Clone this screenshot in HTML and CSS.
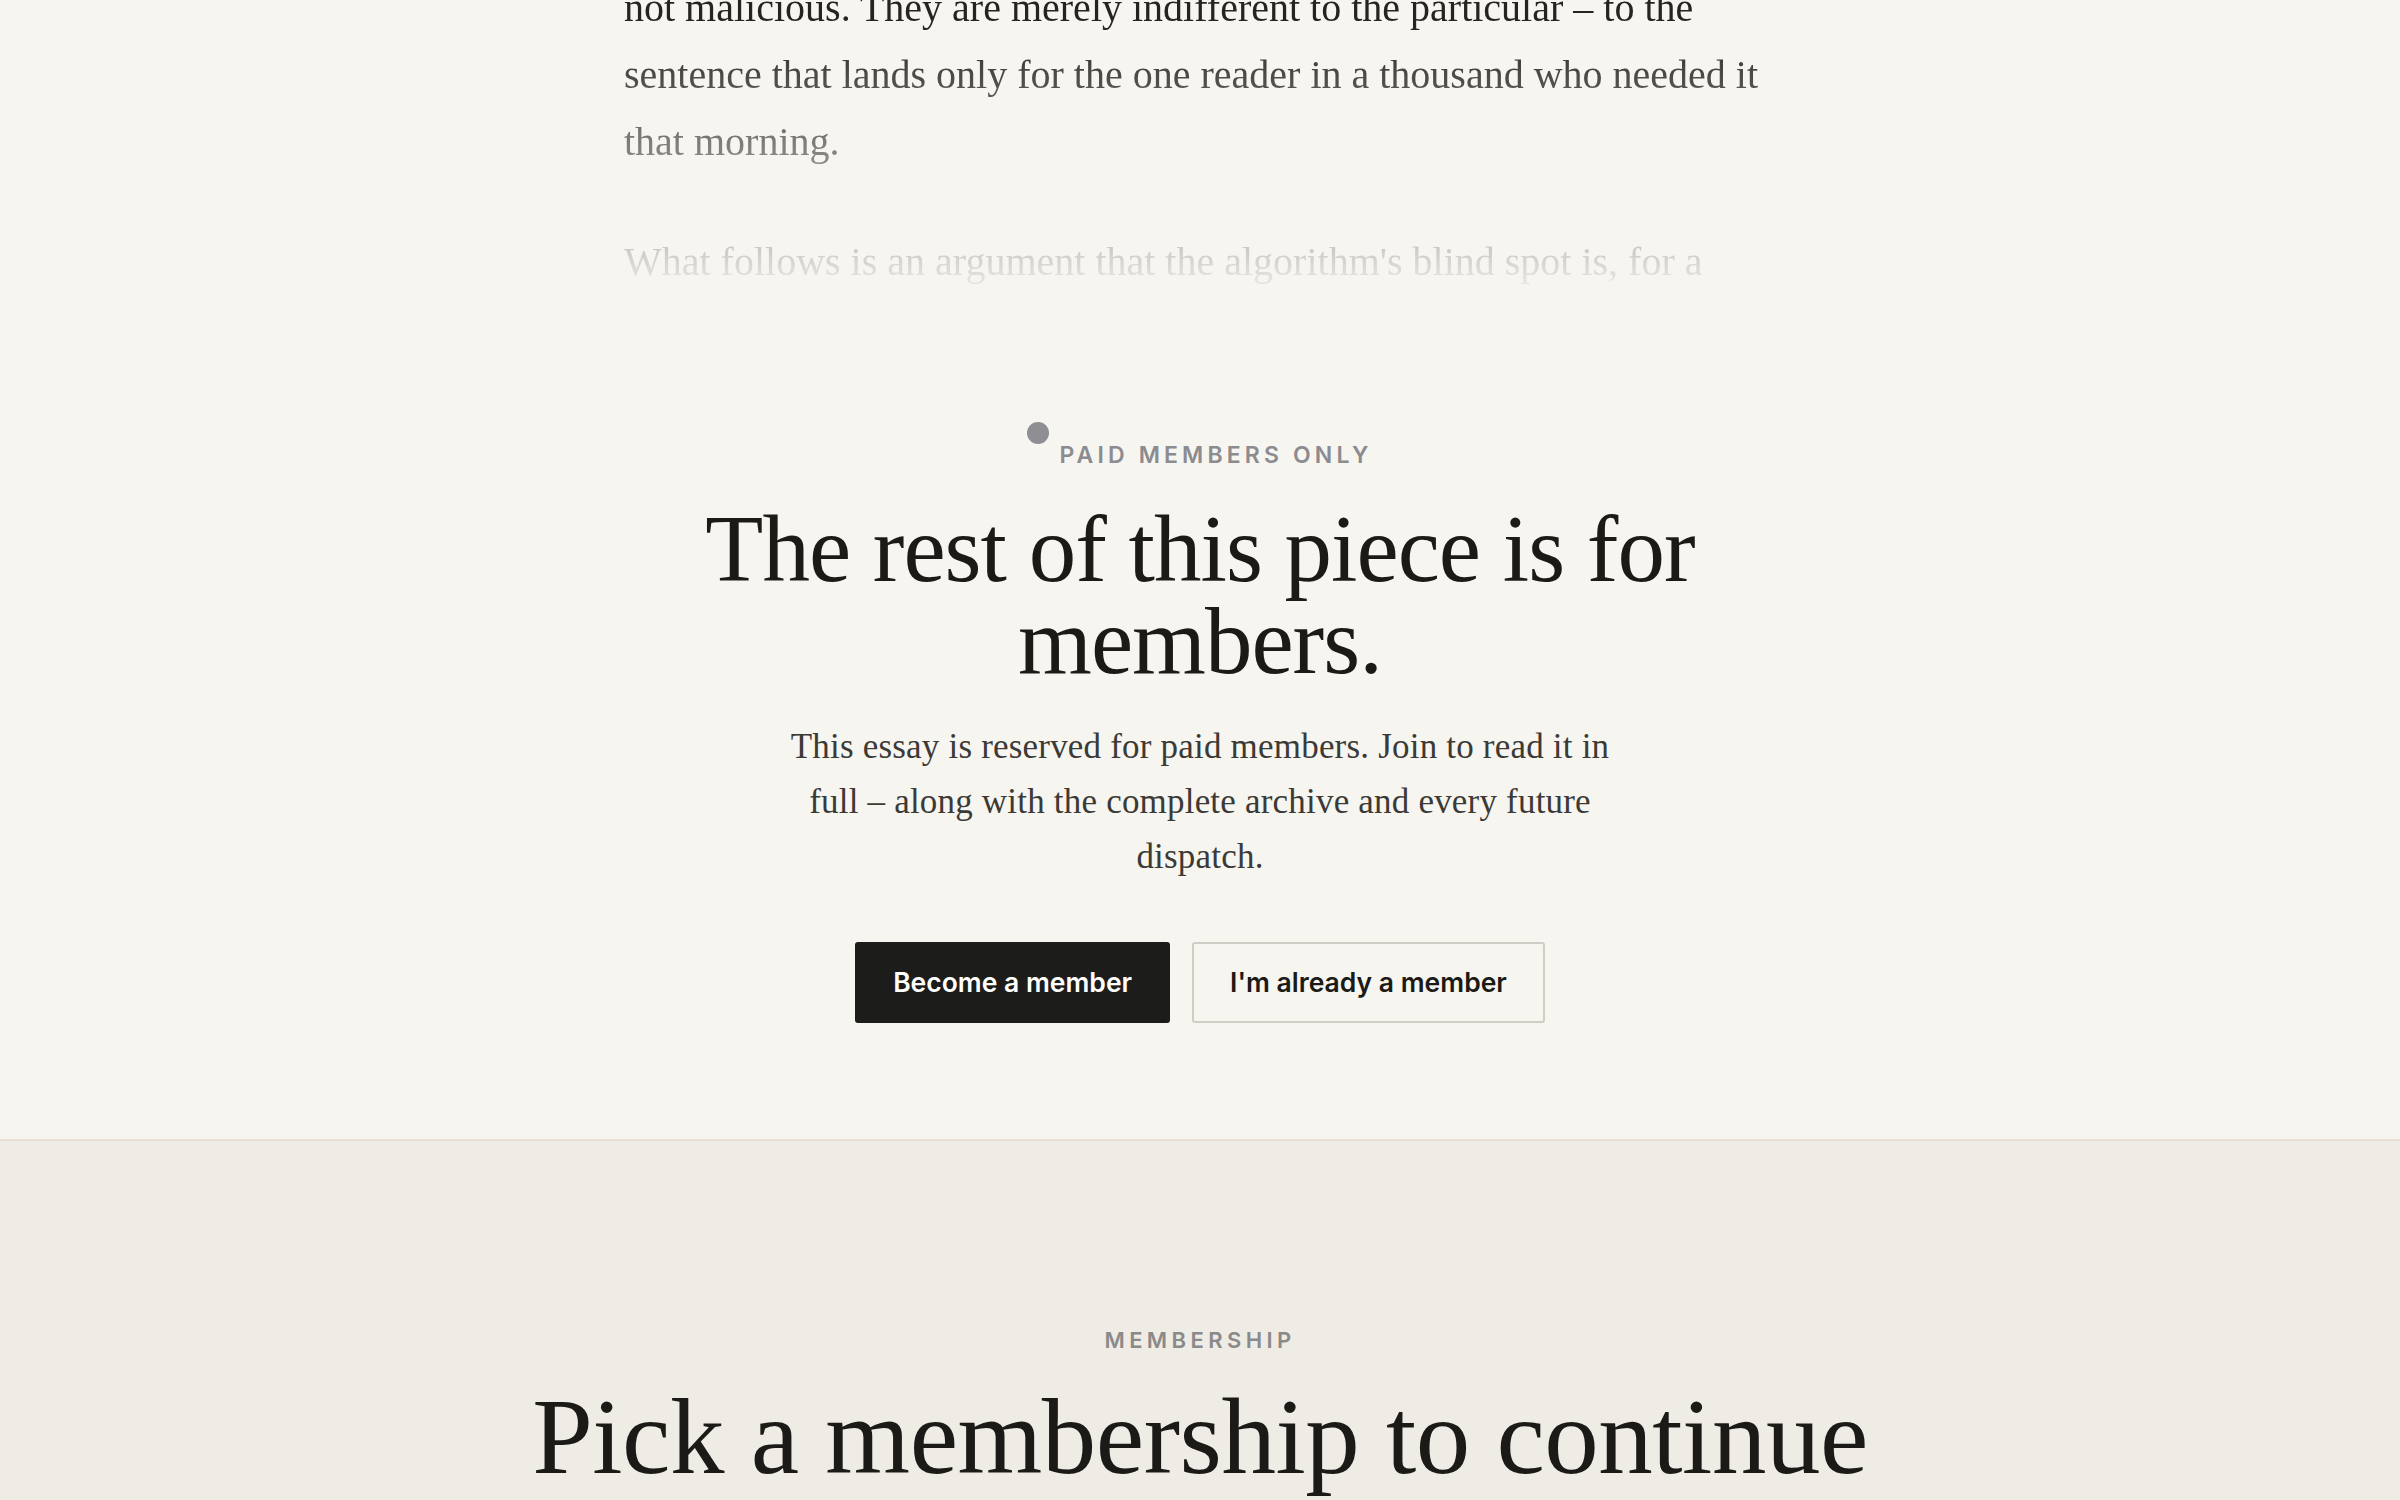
FILE: index.html
```html
<!DOCTYPE html>
<html lang="en">
<head>
    <meta charset="UTF-8">
    <meta name="viewport" content="width=device-width, initial-scale=1.0">
    <title>The Particular Reader</title>
    <link rel="stylesheet" href="styles.css">
</head>
<body>

<article class="article">
    <div class="excerpt">
        <p>not malicious. They are merely indifferent to the particular – to the sentence that lands only for the one reader in a thousand who needed it that morning.</p>
        <p>What follows is an argument that the algorithm's blind spot is, for a writer, the only place left worth standing.</p>
    </div>

    <div class="paywall">
        <div class="eyebrow">
            <span class="dot"></span>
            <span class="eyebrow-label">Paid members only</span>
        </div>
        <h2 class="paywall-title">The rest of this piece is for members.</h2>
        <p class="paywall-text">This essay is reserved for paid members. Join to read it in full – along with the complete archive and every future dispatch.</p>
        <div class="paywall-actions">
            <a href="#plans" class="btn btn-dark">Become a member</a>
            <a href="#signin" class="btn btn-outline">I'm already a member</a>
        </div>
    </div>
</article>

<section class="plans" id="plans">
    <div class="plans-head">
        <div class="plans-eyebrow">Membership</div>
        <h2 class="plans-title">Pick a membership to continue</h2>
    </div>
</section>

</body>
</html>
```

FILE: styles.css
```css
* {
    box-sizing: border-box;
    margin: 0;
    padding: 0;
}

body {
    background-color: #f6f5f0;
    color: #1b1a17;
    font-family: "Liberation Serif", "Times New Roman", serif;
}

.article {
    max-width: 1152px;
    margin: -26px auto 0;
}

.excerpt {
    height: 330px;
    overflow: hidden;
    -webkit-mask-image: linear-gradient(to bottom, #000 50px, transparent 100%);
    mask-image: linear-gradient(to bottom, #000 50px, transparent 100%);
}

.excerpt p {
    font-size: 40px;
    line-height: 67px;
    color: #252420;
    margin-bottom: 53px;
}

.paywall {
    padding: 118px 0 116px;
    text-align: center;
}

.eyebrow {
    display: flex;
    justify-content: center;
    align-items: flex-start;
    gap: 10px;
}

.dot {
    width: 22px;
    height: 22px;
    border-radius: 50%;
    background-color: #8e8e93;
}

.eyebrow-label {
    margin-top: 17px;
    font-family: Inter, "Liberation Sans", sans-serif;
    font-size: 23px;
    line-height: 1.4;
    font-weight: 600;
    letter-spacing: 0.18em;
    text-transform: uppercase;
    color: #8b8b90;
}

.paywall-title {
    max-width: 1040px;
    margin: 32px auto 0;
    font-size: 95px;
    line-height: 92px;
    font-weight: 400;
    letter-spacing: -1px;
    color: #1b1a17;
}

.paywall-text {
    max-width: 840px;
    margin: 32px auto 0;
    font-size: 35px;
    line-height: 55px;
    letter-spacing: 0.2px;
    color: #3b3a36;
}

.paywall-actions {
    display: flex;
    justify-content: center;
    gap: 22px;
    margin-top: 58px;
}

.btn {
    display: inline-block;
    padding: 23px 36px;
    border: 2px solid transparent;
    border-radius: 3px;
    font-family: Inter, "Liberation Sans", sans-serif;
    font-size: 26.5px;
    line-height: 31px;
    font-weight: 600;
    text-decoration: none;
}

.btn-dark {
    background-color: #1c1c1a;
    border-color: #1c1c1a;
    color: #ffffff;
}

.btn-outline {
    border-color: #d0cdc7;
    color: #1b1a17;
}

.plans {
    background-color: #efece5;
    border-top: 2px solid #e5dfd6;
    padding: 184px 0 120px;
}

.plans-head {
    text-align: center;
}

.plans-eyebrow {
    font-family: Inter, "Liberation Sans", sans-serif;
    font-size: 22px;
    line-height: 1.4;
    font-weight: 600;
    letter-spacing: 0.2em;
    text-transform: uppercase;
    color: #8a8a8a;
}

.plans-title {
    margin-top: 26px;
    font-size: 109px;
    line-height: 1;
    font-weight: 400;
    letter-spacing: -0.5px;
    color: #1b1a17;
}
```
